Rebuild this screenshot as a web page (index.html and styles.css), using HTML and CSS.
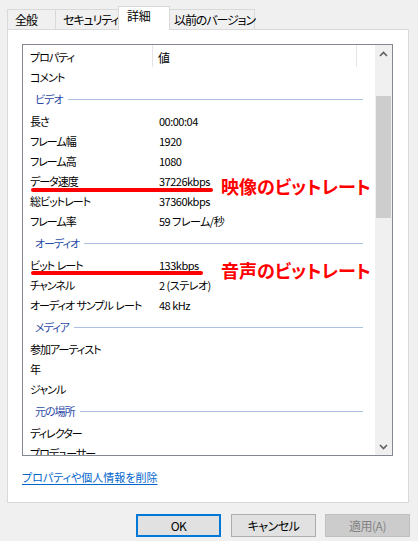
FILE: index.html
```html
<!DOCTYPE html>
<html lang="ja">
<head>
<meta charset="utf-8">
<link rel="stylesheet" href="styles.css">
</head>
<body>
<div class="tabs">
  <div class="tab tab-general">全般</div>
  <div class="tab tab-security">セキュリティ</div>
  <div class="tab tab-details active">詳細</div>
  <div class="tab tab-prev">以前のバージョン</div>
</div>
<div class="panel">
  <div class="listbox">
    <div class="list">
      <div class="header">
        <div class="hcol name">プロパティ</div>
        <div class="hcol val">値</div>
        <div class="hcol rest"></div>
      </div>
      <div class="row"><span class="name">コメント</span><span class="val"></span></div>
      <div class="group"><span class="gtitle">ビデオ</span><span class="gline"></span></div>
      <div class="row"><span class="name">長さ</span><span class="val">00:00:04</span></div>
      <div class="row"><span class="name">フレーム幅</span><span class="val">1920</span></div>
      <div class="row"><span class="name">フレーム高</span><span class="val">1080</span></div>
      <div class="row"><span class="name">データ速度</span><span class="val">37226kbps</span></div>
      <div class="row"><span class="name">総ビットレート</span><span class="val">37360kbps</span></div>
      <div class="row"><span class="name">フレーム率</span><span class="val">59 フレーム/秒</span></div>
      <div class="group"><span class="gtitle">オーディオ</span><span class="gline"></span></div>
      <div class="row"><span class="name">ビット レート</span><span class="val">133kbps</span></div>
      <div class="row"><span class="name">チャンネル</span><span class="val">2 (ステレオ)</span></div>
      <div class="row"><span class="name">オーディオ サンプル レート</span><span class="val">48 kHz</span></div>
      <div class="group"><span class="gtitle">メディア</span><span class="gline"></span></div>
      <div class="row"><span class="name">参加アーティスト</span><span class="val"></span></div>
      <div class="row"><span class="name">年</span><span class="val"></span></div>
      <div class="row"><span class="name">ジャンル</span><span class="val"></span></div>
      <div class="group"><span class="gtitle">元の場所</span><span class="gline"></span></div>
      <div class="row"><span class="name">ディレクター</span><span class="val"></span></div>
      <div class="row"><span class="name">プロデューサー</span><span class="val"></span></div>

      <div class="mark mark-video"></div>
      <div class="note note-video">映像のビットレート</div>
      <div class="mark mark-audio"></div>
      <div class="note note-audio">音声のビットレート</div>
    </div>
    <div class="scrollbar">
      <div class="sbtn">
        <svg width="9" height="6" viewBox="0 0 9 6"><path d="M1 5 L4.5 1.5 L8 5" fill="none" stroke="#606060" stroke-width="1.6"/></svg>
      </div>
      <div class="track"><div class="thumb"></div></div>
      <div class="sbtn">
        <svg width="9" height="6" viewBox="0 0 9 6"><path d="M1 1 L4.5 4.5 L8 1" fill="none" stroke="#606060" stroke-width="1.6"/></svg>
      </div>
    </div>
  </div>
  <a class="link" href="#">プロパティや個人情報を削除</a>
</div>
<div class="buttons">
  <button class="btn default">OK</button>
  <button class="btn">キャンセル</button>
  <button class="btn disabled">適用(A)</button>
</div>
</body>
</html>
```

FILE: styles.css
```css
* { box-sizing: border-box; }
html, body {
  margin: 0;
  padding: 0;
  background: #f0f0f0;
  width: 418px;
  height: 541px;
  overflow: hidden;
  font-family: "Noto Sans CJK JP", "Noto Sans", sans-serif;
  font-size: 11px;
  color: #000;
  font-feature-settings: "palt" 1;
}

.tabs {
  display: flex;
  align-items: flex-end;
  height: 29px;
  padding-left: 7px;
}
.tab {
  height: 20px;
  border: 1px solid #d9d9d9;
  border-bottom: none;
  background: #f0f0f0;
  display: flex;
  align-items: center;
  justify-content: flex-start;
  line-height: 1;
  padding-top: 1px;
  padding-left: 7px;
  margin-left: -1px;
  white-space: nowrap;
  font-size: 12px;
  letter-spacing: -1.1px;
}
.tab-general { width: 49px; margin-left: 0; }
.tab-security { width: 66px; }
.tab-details { width: 48px; }
.tab-prev { width: 88px; padding-left: 6px; }
.tab.active {
  background: #fff;
  height: 24px;
  margin-bottom: -1px;
  margin-left: -3px;
  margin-right: -2px;
  width: 52px;
  padding-top: 0;
  padding-left: 8px;
  padding-bottom: 5px;
  letter-spacing: -0.3px;
  position: relative;
  z-index: 1;
}

.panel {
  margin-left: 7px;
  width: 402px;
  height: 474px;
  background: #fff;
  border: 1px solid #d9d9d9;
  padding-top: 14px;
  padding-left: 14px;
  display: flex;
  flex-direction: column;
}

.listbox {
  width: 371px;
  height: 412px;
  border: 1px solid #828790;
  display: flex;
}
.list {
  flex: 1;
  overflow: hidden;
  position: relative;
}
.header {
  display: flex;
  height: 22px;
}
.hcol {
  display: flex;
  align-items: center;
  padding-top: 2px;
  border-right: 1px solid #e5e5e5;
  letter-spacing: -1px;
}
.hcol.name { width: 130px; padding-left: 7px; }
.hcol.val { width: 204px; padding-left: 5px; font-size: 12px; }
.hcol.rest { flex: 1; border-right: none; }

.row {
  display: flex;
  height: 20px;
  align-items: center;
  white-space: nowrap;
}
.row .name { width: 136px; padding-left: 7px; letter-spacing: -1px; word-spacing: 1px; }
.row .val { flex: 1; letter-spacing: -0.5px; }

.group {
  display: flex;
  align-items: center;
  height: 24px;
  padding-left: 12px;
  padding-right: 12px;
  padding-bottom: 1px;
}
.gtitle { color: #2b4aa6; margin-right: 5px; letter-spacing: -1px; }
.gline { flex: 1; height: 1px; background: #adc0e3; margin-top: 1px; }

.mark {
  position: absolute;
  left: 8px;
  height: 4px;
  border-radius: 2px;
  background: #ff0000;
}
.mark-video { top: 143px; width: 182px; }
.mark-audio { top: 226px; width: 172px; }
.note {
  position: absolute;
  left: 198px;
  color: #ff0000;
  font-weight: bold;
  font-size: 18px;
  line-height: 20px;
  white-space: nowrap;
}
.note-video { top: 131px; }
.note-audio { top: 215px; }

.scrollbar {
  width: 17px;
  background: #f0f0f0;
  display: flex;
  flex-direction: column;
}
.sbtn {
  height: 17px;
  display: flex;
  align-items: center;
  justify-content: center;
}
.track { flex: 1; }
.thumb {
  margin-top: 34px;
  height: 122px;
  margin-left: 1px;
  margin-right: 1px;
  background: #cdcdcd;
}

.link {
  margin-top: 13px;
  color: #0066cc;
  text-decoration: underline;
  text-underline-offset: 2px;
  line-height: 16px;
  align-self: flex-start;
  white-space: nowrap;
}

.buttons {
  display: flex;
  justify-content: flex-end;
  gap: 10px;
  padding-right: 8px;
  margin-top: 11px;
}
.btn {
  width: 85px;
  height: 23px;
  border: 1px solid #adadad;
  background: #e1e1e1;
  font-family: inherit;
  font-size: 12px;
  font-feature-settings: "palt" 1;
  letter-spacing: -0.5px;
  color: #000;
  padding: 0;
}
.btn.default { border: 2px solid #0078d7; }
.btn.disabled { background: #cccccc; border-color: #bfbfbf; color: #838383; margin-left: -1px; }
```
